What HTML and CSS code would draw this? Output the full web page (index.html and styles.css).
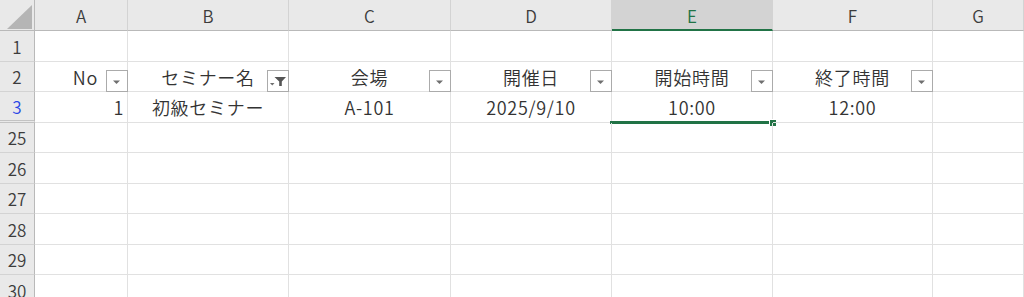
FILE: index.html
```html
<!DOCTYPE html>
<html lang="ja">
<head>
<meta charset="utf-8">
<link rel="stylesheet" href="styles.css">
</head>
<body>
<div class="sheet">
  <div class="corner"><svg class="tri" width="34" height="30" viewBox="0 0 34 30"><polygon points="32,5 32,29 7,29" fill="#b5b5b5"/></svg></div>
  <div class="ch">A</div><div class="ch">B</div><div class="ch">C</div><div class="ch">D</div><div class="ch sel">E</div><div class="ch">F</div><div class="ch">G</div>

  <div class="rh">1</div><div class="c"></div><div class="c"></div><div class="c"></div><div class="c"></div><div class="c"></div><div class="c"></div><div class="c"></div>

  <div class="rh">2</div>
  <div class="c hd"><span class="t ta">No</span><span class="fb"><svg width="20" height="20" viewBox="0 0 20 20"><polygon points="6,9.5 13,9.5 9.5,13" fill="#6f6f6f"/></svg></span></div>
  <div class="c hd"><span class="t">セミナー名</span><span class="fb"><svg width="20" height="20" viewBox="0 0 20 20"><polygon points="2,12 6.5,12 4.25,14.5" fill="#6f6f6f"/><polygon points="6.5,6 18,6 13.8,10.5 13.8,15 11.2,15 11.2,10.5" fill="#555"/></svg></span></div>
  <div class="c hd"><span class="t">会場</span><span class="fb"><svg width="20" height="20" viewBox="0 0 20 20"><polygon points="6,9.5 13,9.5 9.5,13" fill="#6f6f6f"/></svg></span></div>
  <div class="c hd"><span class="t">開催日</span><span class="fb"><svg width="20" height="20" viewBox="0 0 20 20"><polygon points="6,9.5 13,9.5 9.5,13" fill="#6f6f6f"/></svg></span></div>
  <div class="c hd"><span class="t">開始時間</span><span class="fb"><svg width="20" height="20" viewBox="0 0 20 20"><polygon points="6,9.5 13,9.5 9.5,13" fill="#6f6f6f"/></svg></span></div>
  <div class="c hd"><span class="t">終了時間</span><span class="fb"><svg width="20" height="20" viewBox="0 0 20 20"><polygon points="6,9.5 13,9.5 9.5,13" fill="#6f6f6f"/></svg></span></div>
  <div class="c"></div>

  <div class="rh rsel hid">3</div>
  <div class="c r">1</div>
  <div class="c m">初級セミナー</div>
  <div class="c m">A-101</div>
  <div class="c m">2025/9/10</div>
  <div class="c m active">10:00<span class="selbar"></span><span class="handle"></span></div>
  <div class="c m">12:00</div>
  <div class="c"></div>

  <div class="rh">25</div><div class="c"></div><div class="c"></div><div class="c"></div><div class="c"></div><div class="c"></div><div class="c"></div><div class="c"></div>
  <div class="rh">26</div><div class="c"></div><div class="c"></div><div class="c"></div><div class="c"></div><div class="c"></div><div class="c"></div><div class="c"></div>
  <div class="rh">27</div><div class="c"></div><div class="c"></div><div class="c"></div><div class="c"></div><div class="c"></div><div class="c"></div><div class="c"></div>
  <div class="rh">28</div><div class="c"></div><div class="c"></div><div class="c"></div><div class="c"></div><div class="c"></div><div class="c"></div><div class="c"></div>
  <div class="rh">29</div><div class="c"></div><div class="c"></div><div class="c"></div><div class="c"></div><div class="c"></div><div class="c"></div><div class="c"></div>
  <div class="rh">30</div><div class="c"></div><div class="c"></div><div class="c"></div><div class="c"></div><div class="c"></div><div class="c"></div><div class="c"></div>
</div>
</body>
</html>
```

FILE: styles.css
```css
* { box-sizing: border-box; }
html, body {
  margin: 0;
  padding: 0;
  background: #ffffff;
  overflow: hidden;
}
body {
  width: 1024px;
  height: 297px;
  font-family: "Noto Sans CJK JP", "Noto Sans", sans-serif;
  color: #333333;
}
.sheet {
  display: grid;
  grid-template-columns: 35px 93px 161px 162px 161px 161px 160px 1fr;
  grid-template-rows: 31px 31px 30px 31px 30px 31px 30px 31px 30px 31px;
  width: 1024px;
}
.corner {
  background: #e9e9e9;
  border-right: 1px solid #b9b9b9;
  border-bottom: 1px solid #b9b9b9;
  position: relative;
}
.tri { display: block; }
.ch {
  background: #e9e9e9;
  border-right: 1px solid #d3d3d3;
  border-bottom: 1px solid #b9b9b9;
  display: flex;
  align-items: center;
  justify-content: center;
  font-size: 17px;
  font-weight: 350;
  color: #3c3c3c;
  padding-top: 1px;
}
.ch.sel {
  background: #d3d3d3;
  color: #217346;
  border-bottom: 2px solid #217346;
}
.rh {
  background: #e9e9e9;
  border-right: 1px solid #b9b9b9;
  border-bottom: 1px solid #d3d3d3;
  display: flex;
  align-items: center;
  justify-content: center;
  font-size: 17px;
  font-weight: 350;
  color: #3c3c3c;
}
.rh.rsel { color: #2b48e6; }
.rh.hid { border-bottom: 3px double #c3c3c3; }
.c {
  border-right: 1px solid #e1e1e1;
  border-bottom: 1px solid #e1e1e1;
  font-size: 18px;
  font-weight: 350;
  letter-spacing: 0.7px;
  color: #333333;
  position: relative;
  display: flex;
  align-items: center;
}
.c.r { justify-content: flex-end; padding-right: 3px; }
.c.m { justify-content: center; }
.c.hd { justify-content: center; }
.t { display: block; }
.ta { margin-left: auto; margin-right: 29px; }
.fb {
  position: absolute;
  right: -1px;
  bottom: -1px;
  width: 22px;
  height: 22px;
  background: #ffffff;
  border: 1px solid #ababab;
  display: flex;
  align-items: center;
  justify-content: center;
}
.fb svg { display: block; }
.selbar {
  position: absolute;
  left: -2px;
  right: -1px;
  bottom: -2px;
  height: 3px;
  background: #217346;
}
.handle {
  position: absolute;
  right: -5px;
  bottom: -5px;
  width: 8px;
  height: 8px;
  background: #217346;
  border: 1px solid #ffffff;
}
```
